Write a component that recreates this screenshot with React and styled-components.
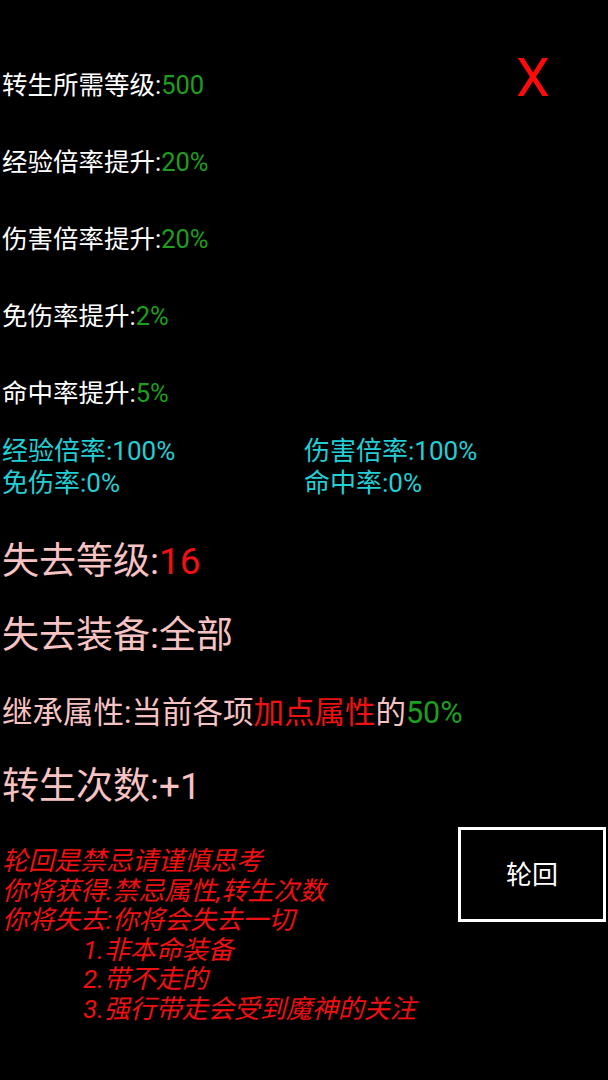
import React from 'react'
import styled, { createGlobalStyle } from 'styled-components'

const GlobalStyle = createGlobalStyle`
  html, body {
    margin: 0;
    padding: 0;
    background: #000000;
  }
  body {
    font-family: Roboto, "Noto Sans CJK SC", sans-serif;
  }
`

const green = '#1e9e1e'
const red = '#ee1111'
const pink = '#f6c2c2'
const cyan = '#22cfd6'

const Page = styled.div`
  width: 608px;
  height: 1080px;
  box-sizing: border-box;
  padding: 51px 0 0 2px;
  background: #000000;
  display: flex;
  flex-direction: column;
  overflow: hidden;
`

const Top = styled.div`
  display: flex;
  justify-content: space-between;
  align-items: flex-start;
`

const StatList = styled.div`
  display: flex;
  flex-direction: column;
  gap: 47px;
  padding-top: 19px;
`

const StatRow = styled.div`
  font-size: 25.5px;
  line-height: 30px;
  color: #ffffff;
  white-space: nowrap;
`

const Close = styled.div`
  width: 80px;
  margin-right: 35px;
  text-align: center;
  font-family: Roboto, sans-serif;
  font-size: 54px;
  line-height: 54px;
  color: #ff0a0a;
  cursor: pointer;
`

const Value = styled.span`
  color: ${p => p.$color};
`

const Totals = styled.div`
  display: grid;
  grid-template-columns: 302px 1fr;
  margin-top: 27px;
  font-size: 26px;
  line-height: 32px;
  color: ${cyan};
`

const Loss = styled.div`
  font-size: ${p => p.$size || 37}px;
  line-height: ${p => p.$lh || 44}px;
  margin-top: ${p => p.$gap}px;
  color: ${pink};
  white-space: nowrap;
`

const Bottom = styled.div`
  display: flex;
  justify-content: space-between;
  align-items: flex-start;
  margin-top: 18px;
`

const Warning = styled.div`
  padding-top: 20px;
  font-size: 26px;
  line-height: 29.5px;
  font-style: italic;
  color: ${red};
  white-space: nowrap;
`

const WarnLine = styled.div`
  padding-left: ${p => (p.$indent ? 81 : 0)}px;
`

const RebirthButton = styled.div`
  width: 148px;
  height: 95px;
  box-sizing: border-box;
  margin-right: 2px;
  padding-bottom: 5px;
  border: 3px solid #ffffff;
  display: flex;
  align-items: center;
  justify-content: center;
  font-size: 26px;
  color: #ffffff;
  cursor: pointer;
`

const stats = [
  ['转生所需等级:', '500'],
  ['经验倍率提升:', '20%'],
  ['伤害倍率提升:', '20%'],
  ['免伤率提升:', '2%'],
  ['命中率提升:', '5%'],
]

const warnings = [
  ['轮回是禁忌请谨慎思考', false],
  ['你将获得:禁忌属性,转生次数', false],
  ['你将失去:你将会失去一切', false],
  ['1.非本命装备', true],
  ['2.带不走的', true],
  ['3.强行带走会受到魔神的关注', true],
]

export default function App() {
  return (
    <>
      <GlobalStyle />
      <Page>
        <Top>
          <StatList>
            {stats.map(([label, value]) => (
              <StatRow key={label}>
                {label}<Value $color={green}>{value}</Value>
              </StatRow>
            ))}
          </StatList>
          <Close>X</Close>
        </Top>

        <Totals>
          <div>经验倍率:100%</div>
          <div>伤害倍率:100%</div>
          <div>免伤率:0%</div>
          <div>命中率:0%</div>
        </Totals>

        <Loss $gap={41}>失去等级:<Value $color={red}>16</Value></Loss>
        <Loss $gap={30}>失去装备:全部</Loss>
        <Loss $gap={37} $size={30.5} $lh={36}>
          继承属性:当前各项<Value $color={red}>加点属性</Value>的<Value $color={green}>50%</Value>
        </Loss>
        <Loss $gap={34}>转生次数:+1</Loss>

        <Bottom>
          <Warning>
            {warnings.map(([text, indent]) => (
              <WarnLine key={text} $indent={indent}>{text}</WarnLine>
            ))}
          </Warning>
          <RebirthButton>轮回</RebirthButton>
        </Bottom>
      </Page>
    </>
  )
}
